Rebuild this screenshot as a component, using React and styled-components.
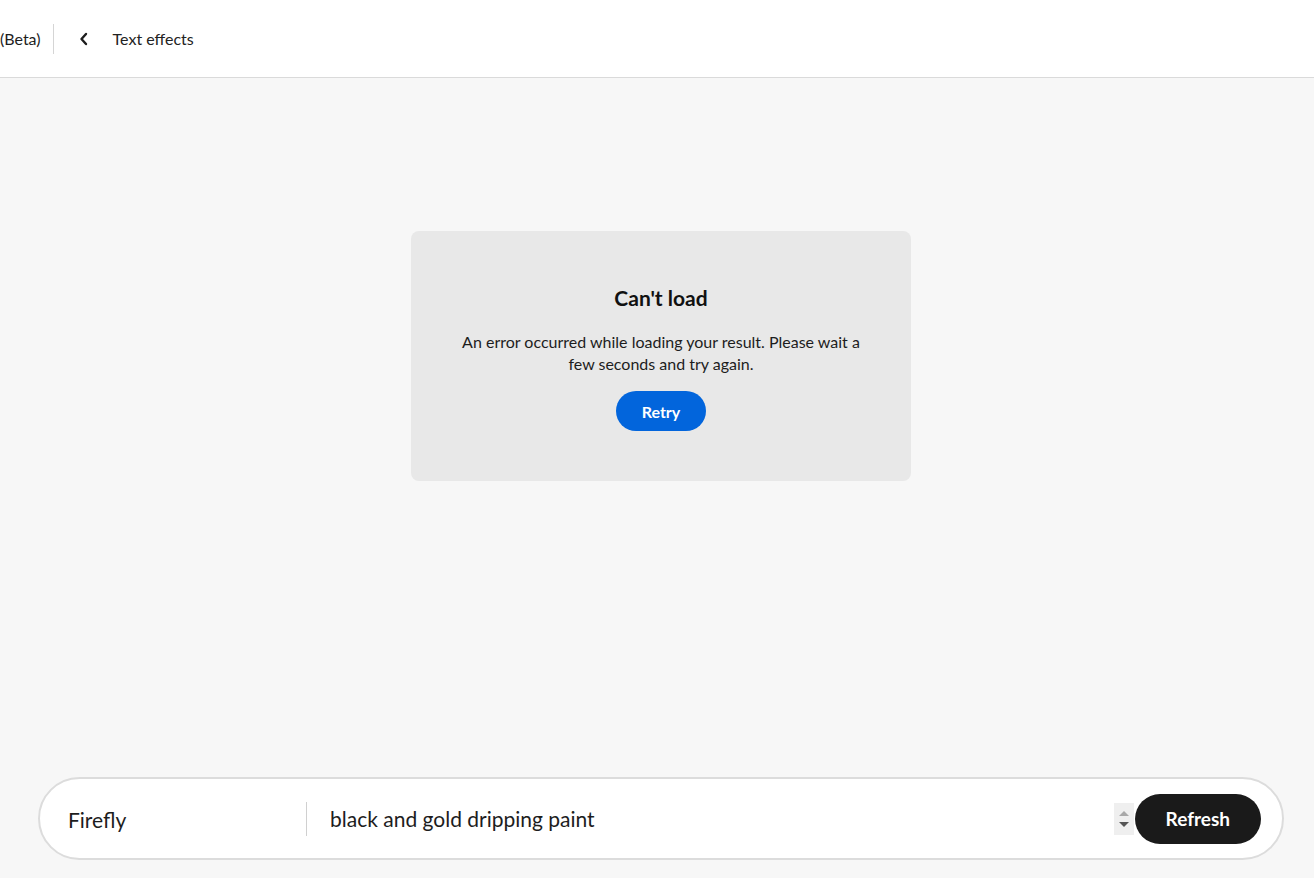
import React from 'react'
import styled, { createGlobalStyle } from 'styled-components'

const Global = createGlobalStyle`
    html, body {
        margin: 0;
        padding: 0;
        height: 100%;
        background: #f7f7f7;
        font-family: Lato, "Noto Sans", sans-serif;
        color: #1d1d1d;
    }
    #root {
        height: 100%;
    }
`

const Page = styled.div`
    height: 878px;
    display: flex;
    flex-direction: column;
    overflow: hidden;
`

const Header = styled.header`
    height: 77px;
    flex-shrink: 0;
    background: #fff;
    border-bottom: 1px solid #dadada;
    display: flex;
    align-items: center;
    font-size: 16px;
`

const Beta = styled.span`
    padding-right: 12px;
    line-height: 30px;
    border-right: 1px solid #d5d5d5;
`

const BackButton = styled.button`
    margin-left: 20px;
    width: 20px;
    height: 30px;
    border: none;
    background: none;
    padding: 0;
    display: flex;
    align-items: center;
    justify-content: center;
    cursor: pointer;
`

const Crumb = styled.span`
    margin-left: 19px;
    color: #222;
`

const Stage = styled.main`
    flex: 1;
    display: flex;
    flex-direction: column;
    align-items: center;
    padding-top: 153px;
    padding-left: 8px;
`

const ErrorCard = styled.div`
    width: 500px;
    height: 250px;
    box-sizing: border-box;
    background: #e8e8e8;
    border-radius: 8px;
    display: flex;
    flex-direction: column;
    align-items: center;
    padding-top: 52px;
    text-align: center;
`

const CardTitle = styled.h2`
    margin: 0;
    font-size: 21px;
    font-weight: 700;
    color: #111;
    line-height: 30px;
`

const CardText = styled.p`
    margin: 18px 0 0;
    width: 412px;
    font-size: 16px;
    line-height: 22px;
    color: #1d1d1d;
`

const PillButton = styled.button`
    border: none;
    font-family: inherit;
    font-weight: 700;
    color: #fff;
    cursor: pointer;
    background: ${p => p.$dark ? '#1a1a1a' : '#0265dc'};
    height: ${p => p.$dark ? '50px' : '40px'};
    padding: 0 ${p => p.$dark ? '31px' : '26px'};
    border-radius: 25px;
    font-size: ${p => p.$dark ? '19px' : '16px'};
`

const RetryButton = styled(PillButton)`
    margin-top: 16px;
`

const PromptBar = styled.div`
    margin: 0 30px 18px 38px;
    height: 83px;
    box-sizing: border-box;
    background: #fff;
    border: 2px solid #dcdcdc;
    border-radius: 42px;
    display: flex;
    align-items: center;
    padding: 0 21px 0 28px;
`

const Model = styled.span`
    width: 238px;
    font-size: 21px;
    color: #1d1d1d;
    padding-top: 2px;
`

const Divider = styled.div`
    width: 1px;
    height: 34px;
    background: #d0d0d0;
`

const PromptInput = styled.input`
    flex: 1;
    border: none;
    outline: none;
    background: transparent;
    font-family: inherit;
    font-size: 21px;
    color: #1d1d1d;
    padding: 0 0 0 23px;
`

const Spinner = styled.div`
    width: 20px;
    height: 32px;
    margin-right: 1px;
    background: #efefef;
    display: flex;
    flex-direction: column;
    align-items: center;
    justify-content: center;
    gap: 6px;
`

const Arrow = styled.div`
    width: 0;
    height: 0;
    border-left: 5px solid transparent;
    border-right: 5px solid transparent;
    ${p => p.$up
        ? 'border-bottom: 5px solid #a8a8a8;'
        : 'border-top: 5px solid #555;'}
`

export default function App() {
    return (
        <Page>
            <Global />
            <Header>
                <Beta>(Beta)</Beta>
                <BackButton aria-label="Back">
                    <svg width="10" height="14" viewBox="0 0 10 14">
                        <path d="M7 2 L2.5 7 L7 12" fill="none" stroke="#1d1d1d" strokeWidth="2.4" strokeLinecap="round" strokeLinejoin="round" />
                    </svg>
                </BackButton>
                <Crumb>Text effects</Crumb>
            </Header>
            <Stage>
                <ErrorCard>
                    <CardTitle>Can't load</CardTitle>
                    <CardText>An error occurred while loading your result. Please wait a few seconds and try again.</CardText>
                    <RetryButton>Retry</RetryButton>
                </ErrorCard>
            </Stage>
            <PromptBar>
                <Model>Firefly</Model>
                <Divider />
                <PromptInput defaultValue="black and gold dripping paint" />
                <Spinner>
                    <Arrow $up />
                    <Arrow />
                </Spinner>
                <PillButton $dark>Refresh</PillButton>
            </PromptBar>
        </Page>
    )
}
